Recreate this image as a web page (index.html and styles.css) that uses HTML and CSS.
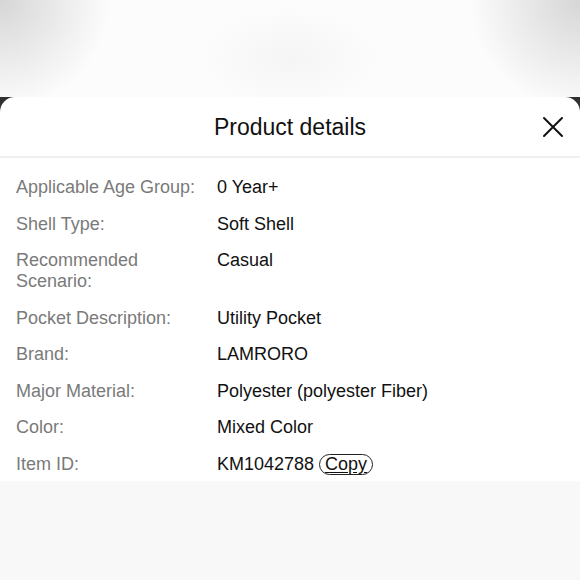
FILE: index.html
```html
<!DOCTYPE html>
<html lang="en">
<head>
  <meta charset="UTF-8">
  <title>Product details</title>
  <link rel="stylesheet" href="styles.css">
</head>
<body>
  <div class="top"></div>
  <div class="sheet-wrap">
    <div class="sheet">
      <div class="header">
        <h2>Product details</h2>
        <button class="close" aria-label="Close">
          <svg width="22" height="22" viewBox="0 0 22 22">
            <path d="M2 2 L20 20 M20 2 L2 20" stroke="#111" stroke-width="2" stroke-linecap="round"/>
          </svg>
        </button>
      </div>
      <div class="details">
        <div class="label">Applicable Age Group:</div>
        <div class="value">0 Year+</div>
        <div class="label">Shell Type:</div>
        <div class="value">Soft Shell</div>
        <div class="label">Recommended Scenario:</div>
        <div class="value">Casual</div>
        <div class="label">Pocket Description:</div>
        <div class="value">Utility Pocket</div>
        <div class="label">Brand:</div>
        <div class="value">LAMRORO</div>
        <div class="label">Major Material:</div>
        <div class="value">Polyester (polyester Fiber)</div>
        <div class="label">Color:</div>
        <div class="value">Mixed Color</div>
        <div class="label">Item ID:</div>
        <div class="value">KM1042788 <span class="copy">Copy</span></div>
      </div>
    </div>
  </div>
  <div class="bottom"></div>
</body>
</html>
```

FILE: styles.css
```css
html, body {
  margin: 0;
  height: 100%;
}
body {
  font-family: "Liberation Sans", Arial, sans-serif;
  background: #f8f8f8;
  overflow: hidden;
}
.top {
  height: 97px;
  background:
    radial-gradient(ellipse 110px 110px at 0 0, #d6d6d6 0%, rgba(250,250,250,0) 100%),
    radial-gradient(ellipse 110px 110px at 100% 0, #d6d6d6 0%, rgba(250,250,250,0) 100%),
    radial-gradient(ellipse 90px 50px at 50% 60%, #f5f5f5 0%, rgba(252,252,252,0) 100%),
    #fcfcfc;
}
.sheet-wrap {
  background: linear-gradient(#2e2e2e 0, #3a3a3a 18px, transparent 18px);
}
.sheet {
  background: #fff;
  border-radius: 15px 15px 0 0;
  padding-bottom: 6px;
}
.header {
  height: 59px;
  display: flex;
  align-items: center;
  justify-content: center;
  position: relative;
  border-bottom: 2px solid #f0f0f0;
}
.header h2 {
  margin: 0;
  font-size: 23px;
  font-weight: normal;
  color: #111;
  padding-top: 2px;
}
.close {
  position: absolute;
  right: 16px;
  top: 19px;
  border: 0;
  background: none;
  padding: 0;
  width: 22px;
  height: 22px;
}
.details {
  display: grid;
  grid-template-columns: 184px 1fr;
  column-gap: 17px;
  row-gap: 15.5px;
  padding: 19px 16px 0;
  font-size: 18px;
  line-height: 21px;
}
.label {
  color: #7a7a7a;
}
.value {
  color: #111;
}
.copy {
  display: inline-block;
  border: 1px solid #222;
  border-radius: 11px;
  padding: 0 5px;
  line-height: 19px;
  text-decoration: underline;
  text-underline-offset: 2px;
}
```
